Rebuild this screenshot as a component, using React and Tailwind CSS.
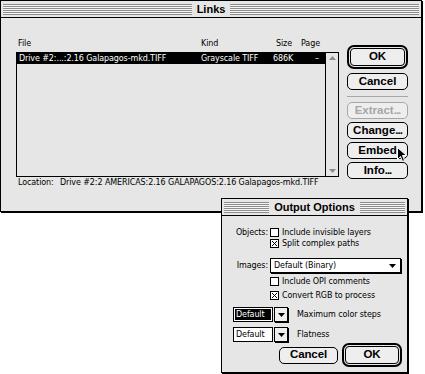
import React from "react";

const small = "font-['DejaVu_Sans',sans-serif] text-[8px] leading-none tracking-[-0.1px]";
const chicago = "font-['Liberation_Sans',sans-serif] font-bold leading-none";

function Stripes() {
  return (
    <div className="h-[11px] flex-1 bg-[repeating-linear-gradient(to_bottom,#8c8c8c_0px,#8c8c8c_1px,#f6f6f6_1px,#f6f6f6_2px)]" />
  );
}

function TitleBar({ title }) {
  return (
    <div className="flex h-[17px] items-center border-b border-black px-[2px]">
      <Stripes />
      <span className={`${chicago} px-[5px] text-[11px] text-black`}>{title}</span>
      <Stripes />
    </div>
  );
}

function Btn({ children, disabled, w = "w-[61px]" }) {
  return (
    <div
      className={`flex h-[17px] ${w} items-center justify-center rounded-[5px] border bg-[#eeeeee] ${chicago} text-[11.5px] ${
        disabled ? "border-[#a6a6a6] text-[#a6a6a6]" : "border-black text-black"
      }`}
    >
      {children}
    </div>
  );
}

function DefaultBtn({ children, w = "w-[61px]" }) {
  return (
    <div className={`flex h-[24px] ${w} rounded-[7px] border-[2px] border-black bg-[#e6e6e6] p-[1px]`}>
      <div className={`flex flex-1 items-center justify-center rounded-[4px] border border-black bg-[#eeeeee] ${chicago} text-[11.5px] text-black`}>
        {children}
      </div>
    </div>
  );
}

function Dots() {
  return <span className="tracking-[-1px]">...</span>;
}

function Check({ checked }) {
  return (
    <svg width="9" height="9" viewBox="0 0 9 9" className="shrink-0">
      <rect x="0.5" y="0.5" width="8" height="8" fill="#ffffff" stroke="#000" />
      {checked && <path d="M2 2L7 7M7 2L2 7" stroke="#000" strokeWidth="1" />}
    </svg>
  );
}

function DownTri() {
  return (
    <svg width="7" height="4" viewBox="0 0 7 4">
      <path d="M0 0H7L3.5 4Z" fill="#000" />
    </svg>
  );
}

function SmallPopup({ selected }) {
  return (
    <div className="flex h-[15px] items-stretch">
      <div className="flex w-[40px] items-center border border-black bg-white p-[1px]">
        <div className={`flex h-full flex-1 items-center pl-[1px] ${small} ${selected ? "bg-black text-white" : "text-black"}`}>
          Default
        </div>
      </div>
      <div className="ml-[1px] flex w-[14px] items-center justify-center border border-black bg-[#eeeeee] shadow-[1px_1px_0_#000]">
        <DownTri />
      </div>
    </div>
  );
}

function Cursor() {
  return (
    <svg width="11" height="16" viewBox="0 0 11 16" className="absolute left-[397px] top-[147px]">
      <path d="M0.5 0.5V12.5L3.5 9.5L5.5 14.5L7.5 13.5L5.5 8.5H9.5Z" fill="#000" stroke="#fff" strokeWidth="1" />
    </svg>
  );
}

export default function App() {
  return (
    <div className="relative h-[374px] w-[425px] overflow-hidden bg-white">
      {/* Links window */}
      <div className="absolute left-0 top-0 h-[212px] w-[422px] border border-black bg-[#e6e6e6] shadow-[1px_1px_0_#000]">
        <TitleBar title="Links" />
        <div className="flex pl-[15px]">
          <div className="flex flex-col pt-[19px]">
            <div className={`flex h-[13px] items-center ${small} text-black`}>
              <span className="w-[185px] pl-[2px]">File</span>
              <span className="w-[75px]">Kind</span>
              <span className="w-[25px]">Size</span>
              <span>Page</span>
            </div>
            <div className="mt-[2px] flex h-[125px] w-[323px] border border-black bg-[#e6e6e6]">
              <div className="flex-1">
                <div className={`flex h-[11px] items-center bg-black ${small} text-white`}>
                  <span className="w-[184px] pl-[2px]">Drive #2:...:2.16 Galapagos-mkd.TIFF</span>
                  <span className="w-[72px]">Grayscale TIFF</span>
                  <span className="w-[42px]">686K</span>
                  <span>–</span>
                </div>
              </div>
              <div className="flex w-[13px] flex-col items-center justify-between border-l border-black bg-[#e6e6e6] py-[3px]">
                <svg width="7" height="4" viewBox="0 0 7 4">
                  <path d="M0 4H7L3.5 0Z" fill="#8c8c8c" />
                </svg>
                <svg width="7" height="4" viewBox="0 0 7 4">
                  <path d="M0 0H7L3.5 4Z" fill="#8c8c8c" />
                </svg>
              </div>
            </div>
            <div className={`flex h-[12px] items-center pl-[2px] ${small} text-black whitespace-nowrap`}>
              <span className="w-[42px]">Location:</span>
              <span>Drive #2:2 AMERICAS:2.16 GALAPAGOS:2.16 Galapagos-mkd.TIFF</span>
            </div>
          </div>
          <div className="ml-[8px] flex flex-col pt-[27px]">
            <DefaultBtn>OK</DefaultBtn>
            <div className="mt-[4px]">
              <Btn>Cancel</Btn>
            </div>
            <div className="mt-[6px] h-px w-[61px] bg-[#a6a6a6]" />
            <div className="mt-[5px] flex flex-col gap-[3px]">
              <Btn disabled>Extract<Dots /></Btn>
              <Btn>Change<Dots /></Btn>
              <Btn>Embed</Btn>
              <Btn>Info<Dots /></Btn>
            </div>
          </div>
        </div>
      </div>

      {/* Output Options window */}
      <div className="absolute left-[221px] top-[198px] h-[175px] w-[187px] border border-black bg-[#e6e6e6] shadow-[1px_1px_0_#000]">
        <TitleBar title="Output Options" />
        <div className={`flex flex-col ${small} text-black`}>
          <div className="mt-[11px] flex h-[11px] items-center">
            <span className="w-[46px] text-right">Objects:</span>
            <span className="ml-[2px]"><Check /></span>
            <span className="ml-[3px]">Include invisible layers</span>
          </div>
          <div className="flex h-[11px] items-center">
            <span className="w-[46px]" />
            <span className="ml-[2px]"><Check checked /></span>
            <span className="ml-[3px]">Split complex paths</span>
          </div>
          <div className="mt-[9px] flex h-[15px] items-center">
            <span className="w-[46px] text-right">Images:</span>
            <div className="ml-[2px] flex h-[15px] w-[131px] items-center justify-between border border-black bg-white pl-[3px] pr-[4px] shadow-[1px_1px_0_#000]">
              <span>Default (Binary)</span>
              <DownTri />
            </div>
          </div>
          <div className="mt-[3px] flex h-[11px] items-center">
            <span className="w-[46px]" />
            <span className="ml-[2px]"><Check /></span>
            <span className="ml-[3px]">Include OPI comments</span>
          </div>
          <div className="mt-[3px] flex h-[11px] items-center">
            <span className="w-[46px]" />
            <span className="ml-[2px]"><Check checked /></span>
            <span className="ml-[3px]">Convert RGB to process</span>
          </div>
          <div className="ml-[11px] mt-[6px] flex items-center">
            <SmallPopup selected />
            <span className="ml-[9px]">Maximum color steps</span>
          </div>
          <div className="ml-[11px] mt-[5px] flex items-center">
            <SmallPopup />
            <span className="ml-[9px]">Flatness</span>
          </div>
          <div className="mt-[1px] flex items-center justify-end gap-[4px] pr-[5px]">
            <Btn w="w-[59px]">Cancel</Btn>
            <DefaultBtn w="w-[60px]">OK</DefaultBtn>
          </div>
        </div>
      </div>

      <Cursor />
    </div>
  );
}
